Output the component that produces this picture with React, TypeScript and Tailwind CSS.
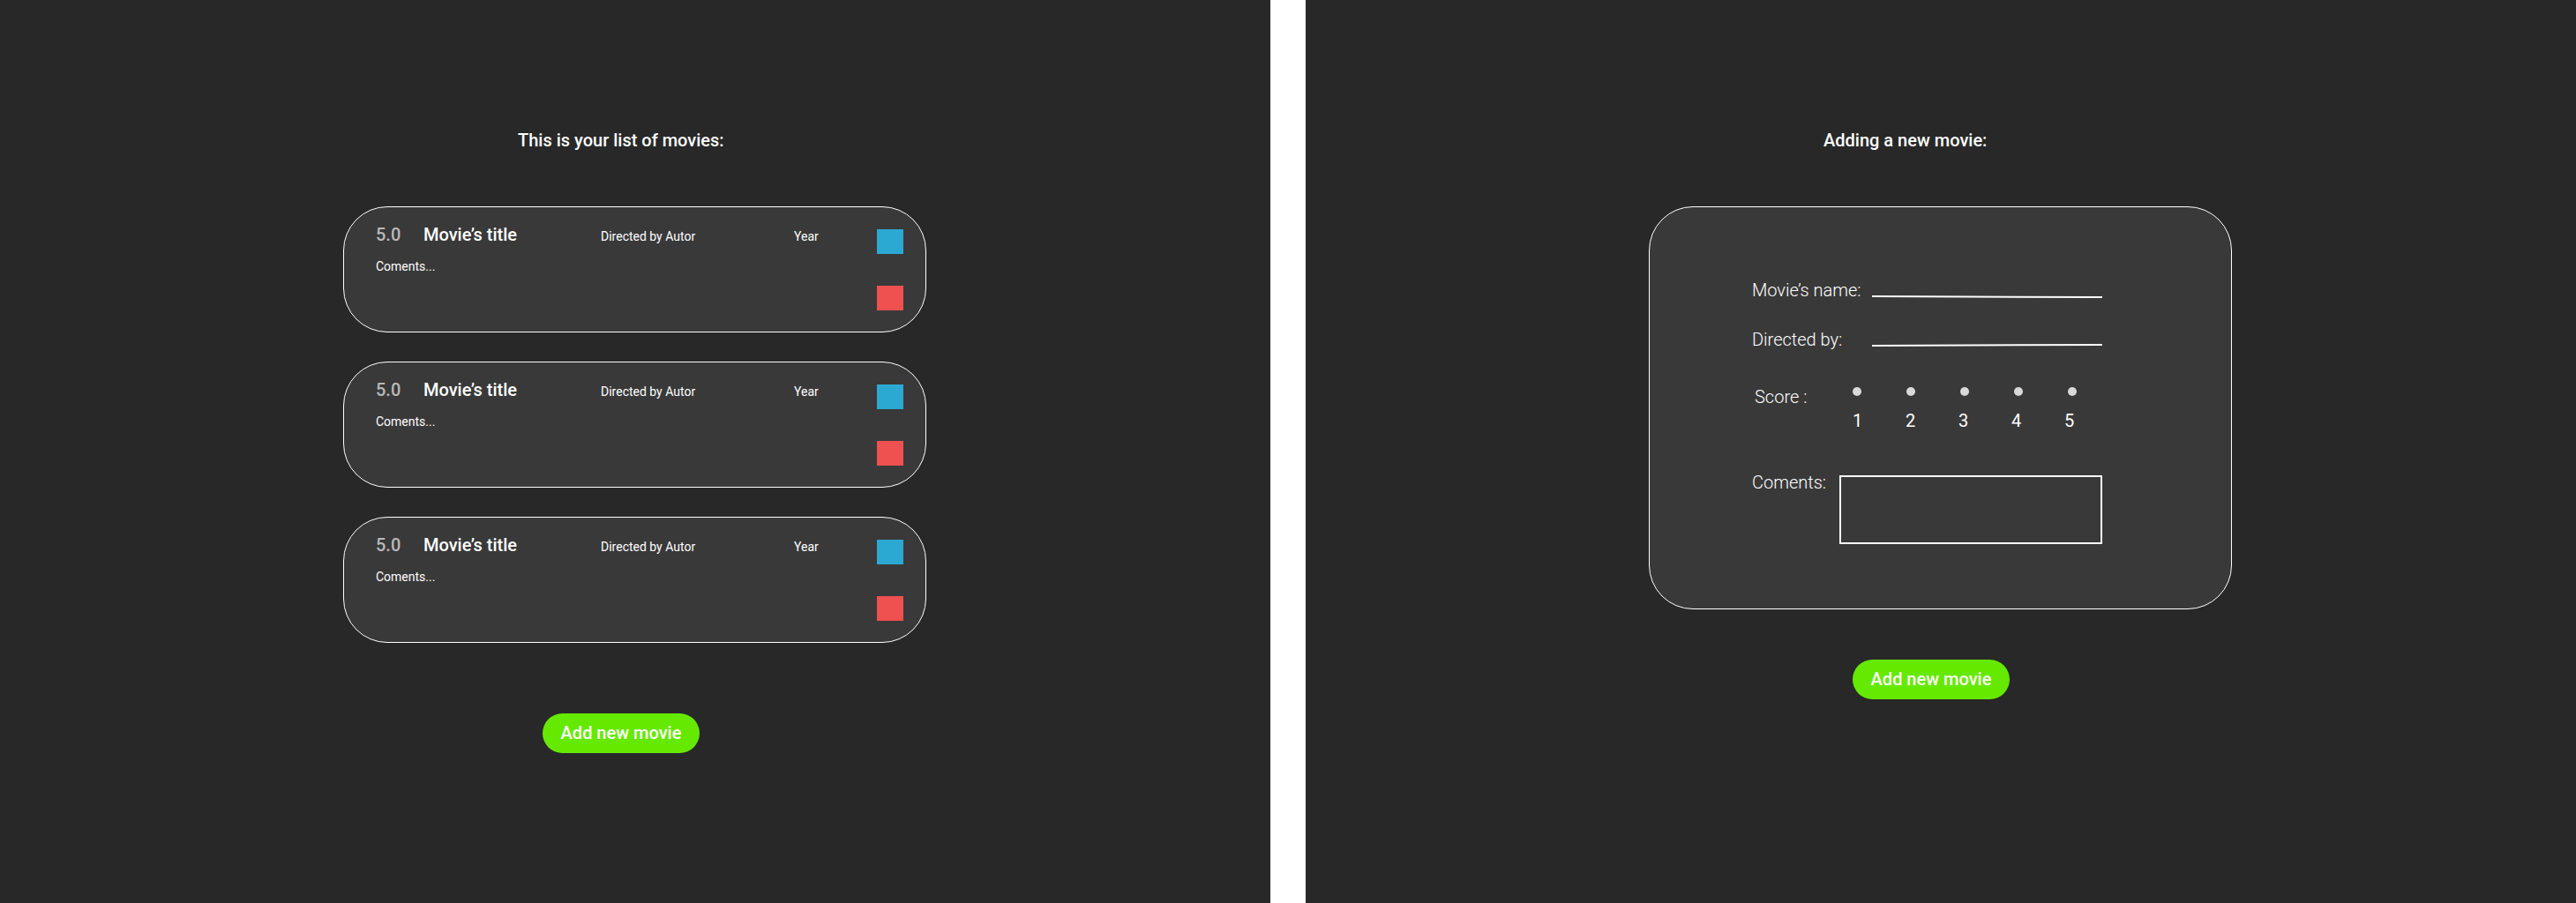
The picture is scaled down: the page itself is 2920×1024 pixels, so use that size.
import React from "react";

const movies = [1, 2, 3].map((id) => ({
  id,
  score: "5.0",
  title: "Movie’s title",
  director: "Directed by Autor",
  year: "Year",
  comments: "Coments...",
}));

const scores = [1, 2, 3, 4, 5];

function AddButton({ className }: { className: string }) {
  return (
    <button
      type="button"
      className={`${className} h-[45px] w-[178px] cursor-pointer rounded-full bg-[#66e900] pb-px text-xl leading-6 font-medium text-white`}
    >
      Add new movie
    </button>
  );
}

function MovieCard({ movie }: { movie: (typeof movies)[number] }) {
  return (
    <li className="flex h-[143px] rounded-[50px] border border-white bg-[#393939] pr-[25px] pl-9">
      <div className="flex-1 pt-[19px]">
        <div className="grid grid-cols-[54px_201fr_219fr_94fr] items-baseline">
          <span className="text-xl leading-6 font-medium text-[#b9b9b9]">{movie.score}</span>
          <h2 className="text-xl leading-6 font-medium">{movie.title}</h2>
          <span className="text-sm leading-4">{movie.director}</span>
          <span className="text-sm leading-4">{movie.year}</span>
        </div>
        <p className="mt-4 text-sm leading-4">{movie.comments}</p>
      </div>
      <div className="flex flex-col gap-9 pt-[25px]">
        <button type="button" aria-label="Edit movie" className="h-7 w-[30px] cursor-pointer bg-[#2ca9d3]" />
        <button type="button" aria-label="Delete movie" className="h-7 w-[30px] cursor-pointer bg-[#ef5050]" />
      </div>
    </li>
  );
}

function UnderlinedInput({ id, y1, y2 }: { id: string; y1: number; y2: number }) {
  return (
    <div className="w-[261px]">
      <input
        id={id}
        type="text"
        className="block h-[22px] w-full bg-transparent text-base font-light text-white outline-none"
      />
      <svg
        className="block h-1 w-full overflow-visible"
        viewBox="0 0 261 4"
        preserveAspectRatio="none"
        aria-hidden="true"
      >
        <line x1="0" y1={y1} x2="261" y2={y2} stroke="white" strokeWidth="2" />
      </svg>
    </div>
  );
}

function MovieList() {
  return (
    <section className="flex flex-1 justify-center bg-[#282828] pt-[147px]">
      <div className="w-full max-w-[662px] pr-px">
        <h1 className="pl-[198px] text-xl leading-6 font-medium">This is your list of movies:</h1>
        <ul className="mt-[63px] flex flex-col gap-[33px]">
          {movies.map((movie) => (
            <MovieCard key={movie.id} movie={movie} />
          ))}
        </ul>
        <AddButton className="mt-20 ml-[226px]" />
      </div>
    </section>
  );
}

function MovieForm() {
  return (
    <section className="flex flex-1 justify-center bg-[#282828] pt-[147px]">
      <form className="w-full max-w-[662px] pr-px">
        <h1 className="pl-[198px] text-xl leading-6 font-medium">Adding a new movie:</h1>
        <div className="mt-[63px] rounded-[50px] border border-white bg-[#393939] pt-[78px] pr-[146px] pb-[73px] pl-[116px] text-xl leading-6 font-light">
          <div className="flex h-14 justify-between">
            <label htmlFor="name" className="pt-1">Movie’s name:</label>
            <UnderlinedInput id="name" y1={1} y2={2} />
          </div>
          <div className="flex h-14 justify-between">
            <label htmlFor="director" className="pt-1">Directed by:</label>
            <UnderlinedInput id="director" y1={1} y2={0} />
          </div>
          <fieldset className="flex h-[114px]" aria-label="Score">
            <span className="w-[114px] pt-[13px] pl-[3px]">Score :</span>
            <div className="pt-[14px]">
              <div className="flex gap-[51px]">
                {scores.map((n) => (
                  <input
                    key={n}
                    id={`score-${n}`}
                    type="radio"
                    name="score"
                    value={n}
                    className="block size-[10px] cursor-pointer appearance-none rounded-full bg-[#d9d9d9] checked:bg-[#66e900]"
                  />
                ))}
              </div>
              <div className="mt-4 flex font-normal">
                {scores.map((n) => (
                  <label key={n} htmlFor={`score-${n}`} className="w-15">
                    {n}
                  </label>
                ))}
              </div>
            </div>
          </fieldset>
          <div className="flex justify-between">
            <label htmlFor="comments" className="-mt-1">Coments:</label>
            <textarea
              id="comments"
              className="block h-[78px] w-[298px] resize-none border-2 border-white bg-transparent p-2 text-base outline-none"
            />
          </div>
        </div>
        <AddButton className="mt-[57px] ml-[231px]" />
      </form>
    </section>
  );
}

export default function App() {
  return (
    <main className="flex min-h-screen gap-10 bg-white font-['Roboto',sans-serif] text-white">
      <MovieList />
      <MovieForm />
    </main>
  );
}
